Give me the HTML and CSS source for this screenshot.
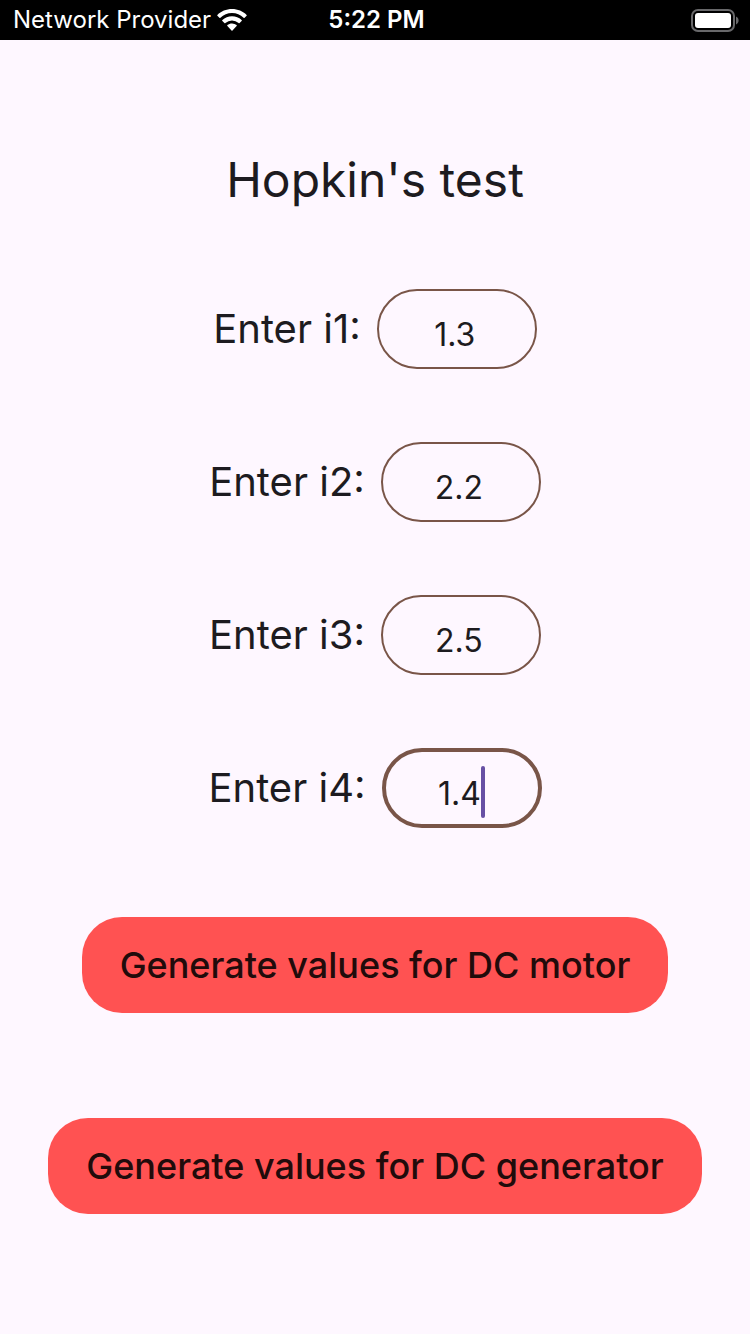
FILE: index.html
```html
<!DOCTYPE html>
<html lang="en">
<head>
<meta charset="utf-8">
<meta name="viewport" content="width=device-width, initial-scale=1">
<title>Hopkin's test</title>
<link rel="stylesheet" href="styles.css">
</head>
<body>
<header class="status">
  <div class="carrier">
    <span>Network Provider</span>
    <svg class="wifi" viewBox="0 0 30 22" aria-hidden="true">
      <path d="M15 0C9.300 0 4 2.200 .4 5.900a.6.6 0 0 0 0 .9l2 2c.3.300.7.300 1 0a16.500 16.500 0 0 1 23.200 0c.3.300.7.300 1 0l2-2a.6.6 0 0 0 0-.9C26 2.200 20.700 0 15 0Z"/>
      <path d="M15 7.300c-3.700 0-7.100 1.400-9.600 3.700a.6.6 0 0 0 0 1l2 2c.3.300.7.300 1 0a9.700 9.700 0 0 1 13.200 0c.3.300.7.300 1 0l2-2a.6.6 0 0 0 0-1A14.200 14.200 0 0 0 15 7.300Z"/>
      <path d="M15 14.400c-1.800 0-3.400.6-4.600 1.700a.6.6 0 0 0 0 .9l4.100 4.500c.3.300.7.300 1 0l4.100-4.500a.6.6 0 0 0 0-.9 6.800 6.800 0 0 0-4.600-1.700Z"/>
    </svg>
  </div>
  <time class="clock">5:22 PM</time>
  <svg class="battery" viewBox="0 0 50 24" aria-hidden="true">
    <rect class="battery-shell" x="2" y="2" width="42" height="21" rx="6"/>
    <rect class="battery-fill" x="5" y="5" width="36" height="15" rx="3"/>
    <path class="battery-tip" d="M46 8.500c1.700.8 2.600 2.200 2.600 4s-.9 3.200-2.600 4Z"/>
  </svg>
</header>
<main class="screen">
  <h1 class="title">Hopkin's test</h1>
  <form class="form">
    <div class="row">
      <label class="label" for="i1">Enter i1:</label>
      <div class="field"><input class="input" id="i1" inputmode="decimal" value="1.3"></div>
    </div>
    <div class="row">
      <label class="label" for="i2">Enter i2:</label>
      <div class="field"><input class="input" id="i2" inputmode="decimal" value="2.2"></div>
    </div>
    <div class="row">
      <label class="label" for="i3">Enter i3:</label>
      <div class="field"><input class="input" id="i3" inputmode="decimal" value="2.5"></div>
    </div>
    <div class="row">
      <label class="label" for="i4">Enter i4:</label>
      <div class="field"><input class="input input-active" id="i4" inputmode="decimal" value="1.4"><span class="caret"></span></div>
    </div>
    <div class="actions">
      <button class="button" type="button">Generate values for DC motor</button>
      <button class="button" type="button">Generate values for DC generator</button>
    </div>
  </form>
</main>
</body>
</html>
```
FILE: styles.css
```css
* {
  box-sizing: border-box;
}

body {
  margin: 0;
  min-height: 100vh;
  background: #fef7ff;
  color: #1d1b20;
  font-family: Inter, "Liberation Sans", sans-serif;
}

.status {
  display: grid;
  grid-template-columns: 1fr auto 1fr;
  align-items: center;
  height: 40px;
  padding: 0 10px 0 13px;
  background: #000;
  color: #fff;
  font-size: 24px;
  line-height: 40px;
}

.carrier {
  display: flex;
  align-items: center;
  gap: 6px;
  white-space: nowrap;
}

.wifi {
  width: 30px;
  height: 22px;
  fill: #fff;
}

.clock {
  font-weight: 600;
}

.battery {
  width: 50px;
  height: 24px;
  justify-self: end;
}

.battery-shell {
  fill: none;
  stroke: #68686a;
  stroke-width: 2;
}

.battery-fill {
  fill: #fff;
}

.battery-tip {
  fill: #68686a;
}

.screen {
  display: flex;
  flex-direction: column;
  align-items: center;
  padding: 108px 24px 0;
}

.title {
  margin: 0 0 77px;
  font-size: 48px;
  font-weight: 400;
  line-height: 64px;
}

.form {
  display: flex;
  flex-direction: column;
  gap: 73px;
  width: 100%;
}

.row {
  display: flex;
  align-items: center;
  justify-content: center;
  gap: 16px;
}

.label {
  font-size: 40px;
  line-height: 56px;
}

.field {
  position: relative;
  width: 160px;
}

.input {
  display: block;
  width: 100%;
  height: 80px;
  padding: 10px 4px 0 0;
  border: 2px solid #795548;
  border-radius: 40px;
  outline: none;
  background: transparent;
  color: inherit;
  font: inherit;
  font-size: 32px;
  text-align: center;
}

.input-active {
  border-width: 4px;
}

.caret {
  position: absolute;
  top: 18px;
  left: 99px;
  width: 4px;
  height: 52px;
  border-radius: 2px;
  background: #6750a4;
}

.actions {
  display: flex;
  flex-direction: column;
  align-items: center;
  gap: 105px;
  padding-top: 16px;
}

.button {
  min-height: 96px;
  padding: 0 38px;
  border: 0;
  border-radius: 40px;
  background: #ff5252;
  color: #210b0b;
  font: inherit;
  font-size: 36px;
  font-weight: 500;
}
```
